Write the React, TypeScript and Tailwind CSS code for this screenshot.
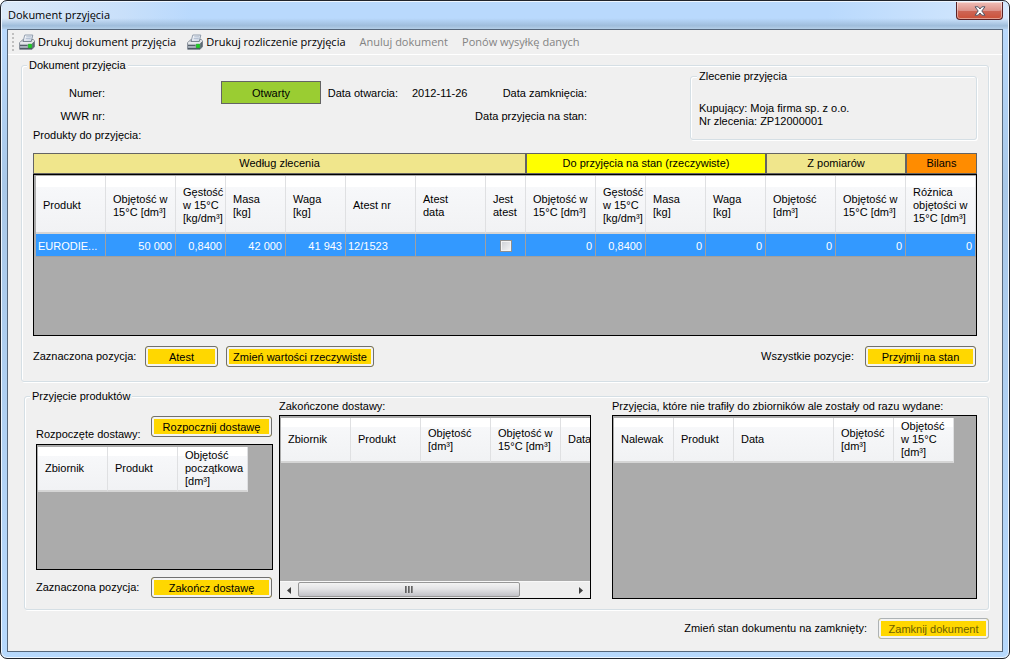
import type { ReactNode } from "react";

type Column = { label: string[]; width: number };

const orderColumns: Column[] = [
  { label: ["Produkt"], width: 70 },
  { label: ["Objętość w", "15°C [dm³]"], width: 70 },
  { label: ["Gęstość", "w 15°C", "[kg/dm³]"], width: 50 },
  { label: ["Masa", "[kg]"], width: 60 },
  { label: ["Waga", "[kg]"], width: 60 },
  { label: ["Atest nr"], width: 70 },
  { label: ["Atest", "data"], width: 70 },
  { label: ["Jest", "atest"], width: 40 },
  { label: ["Objętość w", "15°C [dm³]"], width: 70 },
  { label: ["Gęstość", "w 15°C", "[kg/dm³]"], width: 50 },
  { label: ["Masa", "[kg]"], width: 60 },
  { label: ["Waga", "[kg]"], width: 60 },
  { label: ["Objętość", "[dm³]"], width: 70 },
  { label: ["Objętość w", "15°C [dm³]"], width: 70 },
  { label: ["Różnica", "objętości w", "15°C [dm³]"], width: 70 },
];

const startedColumns: Column[] = [
  { label: ["Zbiornik"], width: 70 },
  { label: ["Produkt"], width: 70 },
  { label: ["Objętość", "początkowa", "[dm³]"], width: 70 },
];

const finishedColumns: Column[] = [
  { label: ["Zbiornik"], width: 70 },
  { label: ["Produkt"], width: 70 },
  { label: ["Objętość", "[dm³]"], width: 70 },
  { label: ["Objętość w", "15°C [dm³]"], width: 70 },
  { label: ["Data"], width: 70 },
];

const issuedColumns: Column[] = [
  { label: ["Nalewak"], width: 60 },
  { label: ["Produkt"], width: 60 },
  { label: ["Data"], width: 100 },
  { label: ["Objętość", "[dm³]"], width: 60 },
  { label: ["Objętość", "w 15°C", "[dm³]"], width: 60 },
];

type Cell = { value: string; numeric?: boolean; checkbox?: boolean };

const orderRow: Cell[] = [
  { value: "EURODIE..." },
  { value: "50 000", numeric: true },
  { value: "0,8400", numeric: true },
  { value: "42 000", numeric: true },
  { value: "41 943", numeric: true },
  { value: "12/1523" },
  { value: "" },
  { value: "", checkbox: true },
  { value: "0", numeric: true },
  { value: "0,8400", numeric: true },
  { value: "0", numeric: true },
  { value: "0", numeric: true },
  { value: "0", numeric: true },
  { value: "0", numeric: true },
  { value: "0", numeric: true },
];

function PrinterIcon() {
  return (
    <svg viewBox="0 0 16 16" className="size-4 shrink-0" aria-hidden="true">
      <defs>
        <linearGradient id="paper" x1="0" y1="0" x2="1" y2="1">
          <stop offset="0" stopColor="#ffffff" />
          <stop offset="1" stopColor="#c3cfdf" />
        </linearGradient>
        <linearGradient id="body" x1="0" y1="0" x2="0" y2="1">
          <stop offset="0" stopColor="#f2f4f6" />
          <stop offset="1" stopColor="#8e99a5" />
        </linearGradient>
      </defs>
      <path d="M4 7.5 5.8 1h8L12.4 7.5z" fill="url(#paper)" stroke="#7c8b9e" strokeWidth=".8" />
      <path d="M7.2 2.8h5M6.7 4.6h5" stroke="#9daec4" strokeWidth=".7" />
      <path d="M.6 8.6 3.6 5.9h.7L3.9 7.5h8.4l.6-2h1.3l1.3 1.2v6l-2.4 2.6H.6z" fill="url(#body)" stroke="#616c78" strokeWidth=".7" />
      <path d="M1 9h12.1l2.1-1.9" fill="none" stroke="#fff" strokeWidth=".9" />
      <path d="M1 11.4h7.5M1 14.6h12" stroke="#4a5560" strokeWidth="1" />
      <path d="m13.2 9.2 2.1-1.9v5.3l-2.1 2.3z" fill="#5d6974" />
      <path d="M9.3 10.2h3.4v3.6H9.3z" fill="#16d41d" stroke="#0b9a12" strokeWidth=".5" />
    </svg>
  );
}

function Group({
  title,
  className,
  legendClassName = "-ml-[6px]",
  children,
}: {
  title: string;
  className: string;
  legendClassName?: string;
  children: ReactNode;
}) {
  return (
    <fieldset
      className={`min-w-0 rounded-[3px] border border-[#d5dfe5] shadow-[1px_1px_0_#fff,inset_1px_1px_0_#fff] ${className}`}
    >
      <legend className={`bg-[#f0f0f0] px-[2px] leading-[13px] ${legendClassName}`}>{title}</legend>
      {children}
    </fieldset>
  );
}

function GoldButton({ children, className, disabled }: { children: ReactNode; className: string; disabled?: boolean }) {
  return (
    <button
      type="button"
      disabled={disabled}
      className={`h-[21px] shrink-0 rounded-[3px] border border-[#707070] bg-[#ffd700] pt-[2px] leading-[13px] shadow-[inset_0_0_0_2px_#f3f3f3] disabled:border-[#adb2b5] disabled:text-[#6d6000] ${className}`}
    >
      {children}
    </button>
  );
}

function HeaderRow({ columns, tall }: { columns: Column[]; tall?: boolean }) {
  return (
    <>
      <colgroup>
        {columns.map((column, i) => (
          <col key={i} style={{ width: column.width }} />
        ))}
      </colgroup>
      <thead>
        <tr className={tall ? "h-[58px]" : "h-[45px]"}>
          {columns.map((column, i) => (
            <th
              key={i}
              scope="col"
              className={`border-r border-b-2 border-r-[#dfe0e2] border-b-[#d5d5d5] bg-linear-to-b from-white from-20% via-[#f7f8fa] via-20% to-[#f1f2f4] pr-0 pb-0 pl-[7px] text-left align-middle leading-[13px] font-normal whitespace-nowrap ${tall ? "pt-[3px]" : "pt-0"}`}
            >
              {column.label.map((line) => (
                <span key={line} className="block">
                  {line}
                </span>
              ))}
            </th>
          ))}
        </tr>
      </thead>
    </>
  );
}

function Sheet({ className, children }: { className: string; children: ReactNode }) {
  return <div className={`flex flex-col overflow-hidden border border-black bg-[#ababab] ${className}`}>{children}</div>;
}

const tableClass = "table-fixed border-separate border-spacing-0";

export default function App() {
  return (
    <div className="flex min-h-screen flex-col rounded-[7px] border border-[#20242c] bg-linear-to-b from-[#b9d9fd] from-[28px] via-[#a9c8e8] via-[184px] to-[#b7d9fd] px-[6px] pb-[6px] font-['Liberation_Sans',Arial,sans-serif] text-[11px] leading-[13px] text-black shadow-[inset_0_0_0_1px_#eef6ff]">
      <header className="-mx-[5px] mt-px flex h-[27px] items-start justify-between rounded-t-[6px] bg-[linear-gradient(to_bottom,transparent_60%,#9fbddb_88%,#b5cfe8),linear-gradient(to_right,#dbe9f8,#c9e0fa_120px,#b9d9fd_190px,#b9d9fd_82%,#d5e8fd)] pr-[5px] pl-[6px]">
        <h1 className="pt-1 font-['Open_Sans','Noto_Sans',sans-serif] text-[11px] leading-[18px]">Dokument przyjęcia</h1>
        <button
          type="button"
          aria-label="Zamknij"
          className="flex h-[18px] w-[47px] items-center justify-center rounded-b-[4px] border border-t-0 border-[#5a2226] bg-linear-to-b from-[#eeb9b2] from-5% via-[#dd938a] via-50% to-[#dc6b50] shadow-[inset_0_0_0_1px_#ffffff70,inset_0_-8px_0_#b8301a70]"
        >
          <svg viewBox="0 0 12 10" className="h-[10px] w-3" aria-hidden="true">
            <path
              d="M1 .8h3.2L6 3 7.8.8H11L7.8 5 11 9.2H7.8L6 7 4.2 9.2H1L4.2 5z"
              fill="#fff"
              stroke="#535666"
              strokeWidth="1"
              strokeLinejoin="round"
            />
          </svg>
        </button>
      </header>

      <main className="flex flex-1 flex-col border border-[#56677b] bg-[#f0f0f0]">
        <nav className="flex h-[25px] items-center border-b border-white pl-1 font-['Open_Sans','Noto_Sans',sans-serif] text-[11px] leading-4">
          <span className="mr-[5px] h-[18px] w-[2px] bg-[repeating-linear-gradient(to_bottom,#c0c0c0_0_2px,transparent_2px_4px)]" />
          <button type="button" className="flex items-center gap-[3px] whitespace-nowrap">
            <PrinterIcon />
            Drukuj dokument przyjęcia
          </button>
          <button type="button" className="ml-[11px] flex items-center gap-[3px] whitespace-nowrap">
            <PrinterIcon />
            Drukuj rozliczenie przyjęcia
          </button>
          <button type="button" disabled className="ml-[14px] whitespace-nowrap text-[#838383]">
            Anuluj dokument
          </button>
          <button type="button" disabled className="ml-[14px] whitespace-nowrap text-[#838383]">
            Ponów wysyłkę danych
          </button>
        </nav>

        <div className="flex flex-col px-[13px] pt-1 pb-3">
          <Group title="Dokument przyjęcia" className="px-[11px] pb-[14px]">
            <div className="flex items-start justify-between">
              <div className="pt-[9px]">
                <dl className="grid grid-cols-[72px_116px_100px_77px_79px_110px] items-center">
                  <dt className="pt-[2px] text-right">Numer:</dt>
                  <dd />
                  <dd className="border border-[#646464] bg-[#9acd32] pt-[5px] pb-[3px] text-center">Otwarty</dd>
                  <dt className="pt-[2px] text-right whitespace-nowrap">Data otwarcia:</dt>
                  <dd className="pt-[2px] pl-[14px] whitespace-nowrap">2012-11-26</dd>
                  <dt className="pt-[2px] text-right whitespace-nowrap">Data zamknięcia:</dt>
                  <dt className="py-[6px] text-right leading-3">WWR nr:</dt>
                  <dd />
                  <dt className="col-span-4 text-right">Data przyjęcia na stan:</dt>
                </dl>
                <p className="leading-[14px]">Produkty do przyjęcia:</p>
              </div>
              <Group title="Zlecenie przyjęcia" className="-mt-[2px] w-[287px] px-2 pb-[11px]" legendClassName="-ml-[2px]">
                <p className="pt-[19px]">Kupujący: Moja firma sp. z o.o.</p>
                <p>Nr zlecenia: ZP12000001</p>
              </Group>
            </div>

            <div className="mt-[11px] grid grid-cols-[493fr_240fr_140fr_71fr] text-center leading-[19px]">
              <div className="border border-[#646464] bg-[#f0e68c]">Według zlecenia</div>
              <div className="border border-[#646464] bg-[#ffff00]">Do przyjęcia na stan (rzeczywiste)</div>
              <div className="border border-[#646464] bg-[#f0e68c]">Z pomiarów</div>
              <div className="border border-[#646464] bg-[#ff8c00]">Bilans</div>
            </div>
            <Sheet className="h-[162px] pt-px pl-[2px]">
              <table className={`w-full ${tableClass}`}>
                <HeaderRow columns={orderColumns} tall />
                <tbody>
                  <tr className="h-[23px] bg-[#3399ff] text-white">
                    {orderRow.map((cell, i) => (
                      <td
                        key={i}
                        className={`border-r border-b border-[#a0a0a0] px-[2px] pt-[2px] pb-0 whitespace-nowrap ${cell.numeric ? "pr-[3px] text-right" : "text-left"}`}
                      >
                        {cell.checkbox ? (
                          <input
                            type="checkbox"
                            aria-label="Jest atest"
                            className="mx-auto block size-[12px] appearance-none border border-[#8e8f8f] bg-linear-to-br from-[#cbcfd5] to-[#f6f6f6] shadow-[inset_0_0_0_1px_#f4f4f4]"
                          />
                        ) : (
                          cell.value
                        )}
                      </td>
                    ))}
                  </tr>
                </tbody>
              </table>
            </Sheet>

            <div className="mt-[10px] flex items-center">
              <span className="w-28">Zaznaczona pozycja:</span>
              <GoldButton className="w-[73px]">Atest</GoldButton>
              <GoldButton className="ml-2 w-[148px]">Zmień wartości rzeczywiste</GoldButton>
              <span className="ml-auto pr-[11px]">Wszystkie pozycje:</span>
              <GoldButton className="mr-px w-[111px]">Przyjmij na stan</GoldButton>
            </div>
          </Group>

          <Group title="Przyjęcie produktów" className="mt-2 ml-[3px] px-[11px] pb-[10px]">
            <div className="-mt-1 grid grid-cols-[237fr_312fr_380fr] gap-[6px]">
              <section className="flex min-w-0 flex-col pt-[17px] pb-px">
                <div className="flex h-[25px] items-start justify-between">
                  <h2 className="self-end">Rozpoczęte dostawy:</h2>
                  <GoldButton className="mr-px w-[121px]">Rozpocznij dostawę</GoldButton>
                </div>
                <Sheet className="mt-[3px] h-[126px] pt-[2px] pl-px">
                  <table className={`w-[210px] ${tableClass}`}>
                    <HeaderRow columns={startedColumns} />
                  </table>
                </Sheet>
                <div className="mt-[7px] flex items-center justify-between">
                  <span>Zaznaczona pozycja:</span>
                  <GoldButton className="mr-px w-[121px]">Zakończ dostawę</GoldButton>
                </div>
              </section>

              <section className="flex min-w-0 flex-col">
                <h2 className="pb-[2px] leading-[14px]">Zakończone dostawy:</h2>
                <Sheet className="h-[184px] pt-[2px] pl-px">
                  <table className={`w-[350px] ${tableClass}`}>
                    <HeaderRow columns={finishedColumns} />
                  </table>
                  <div className="mt-auto -ml-px flex h-[17px] items-stretch border-t border-[#f8f8f8] bg-[#eeeeee]">
                    <button type="button" aria-label="Przewiń w lewo" className="flex w-[18px] items-center justify-center">
                      <svg viewBox="0 0 4 7" className="h-[7px] w-1" aria-hidden="true">
                        <path d="M4 0v7L0 3.5z" fill="#404040" />
                      </svg>
                    </button>
                    <div className="flex flex-1 pb-px">
                      <div className="flex w-[81%] items-center justify-center gap-px rounded-[2px] border border-[#979797] bg-linear-to-b from-[#f3f3f3] via-[#e4e4e6] via-45% to-[#c3c3c8]">
                        <span className="h-[7px] w-[2px] bg-linear-to-r from-[#505050] to-[#a0a0a0]" />
                        <span className="h-[7px] w-[2px] bg-linear-to-r from-[#505050] to-[#a0a0a0]" />
                        <span className="h-[7px] w-[2px] bg-linear-to-r from-[#505050] to-[#a0a0a0]" />
                      </div>
                    </div>
                    <button type="button" aria-label="Przewiń w prawo" className="flex w-[18px] items-center justify-center">
                      <svg viewBox="0 0 4 7" className="h-[7px] w-1" aria-hidden="true">
                        <path d="M0 0v7l4-3.5z" fill="#404040" />
                      </svg>
                    </button>
                  </div>
                </Sheet>
              </section>

              <section className="flex min-w-0 flex-col pl-[15px]">
                <h2 className="pb-[2px] leading-[14px] whitespace-nowrap">
                  Przyjęcia, które nie trafiły do zbiorników ale zostały od razu wydane:
                </h2>
                <Sheet className="h-[184px] pt-[2px] pl-px">
                  <table className={`w-[340px] ${tableClass}`}>
                    <HeaderRow columns={issuedColumns} />
                  </table>
                </Sheet>
              </section>
            </div>
          </Group>

          <footer className="mt-2 flex items-center justify-end">
            <span className="pr-[11px]">Zmień stan dokumentu na zamknięty:</span>
            <GoldButton disabled className="w-[111px]">
              Zamknij dokument
            </GoldButton>
          </footer>
        </div>
      </main>
    </div>
  );
}
